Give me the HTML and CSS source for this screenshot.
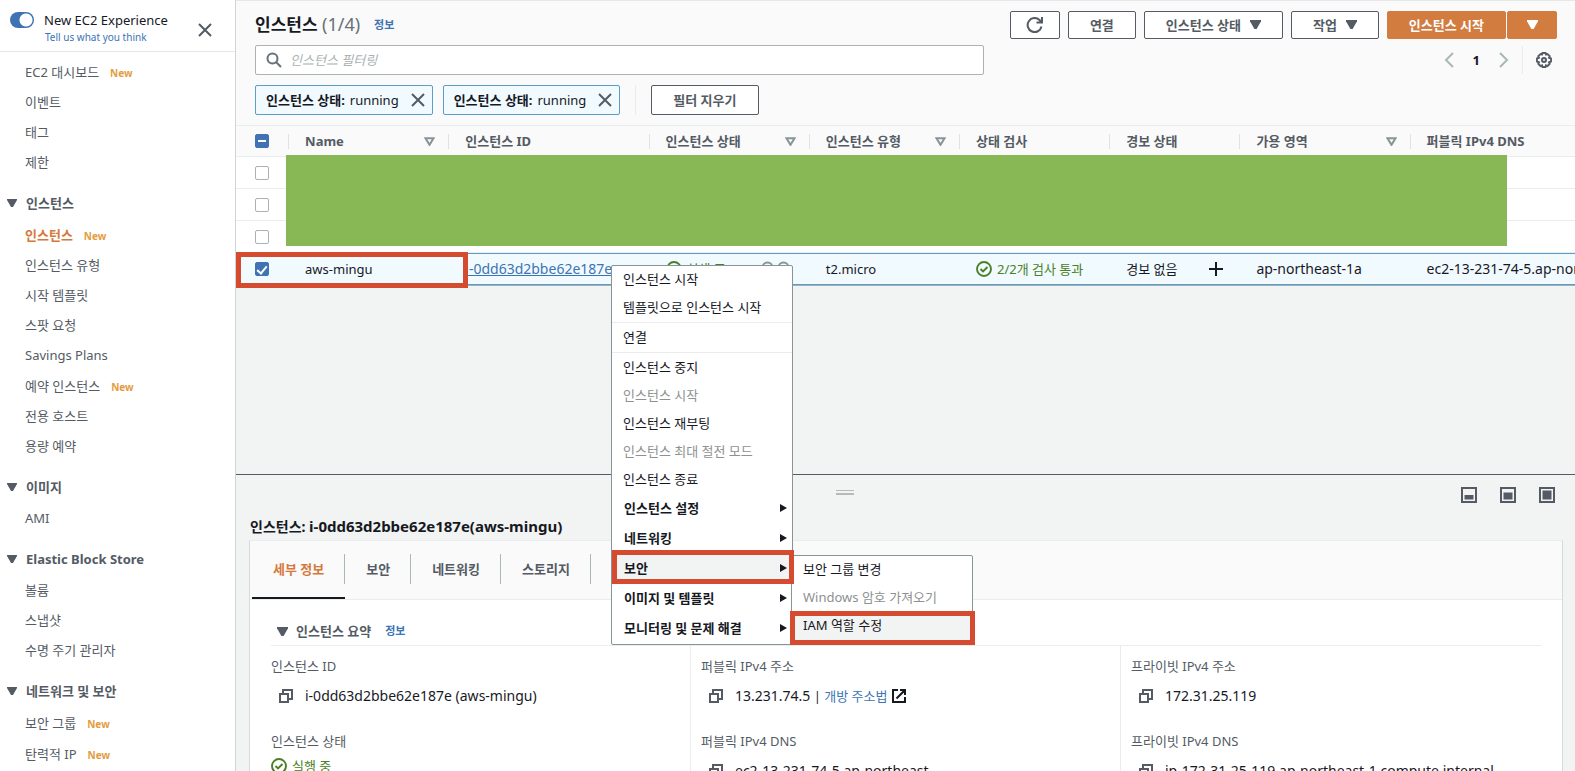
FILE: index.html
```html
<!DOCTYPE html>
<html lang="ko">
<head>
    <meta charset="UTF-8">
    <meta name="viewport" content="width=device-width, initial-scale=1.0">
    <title>인스턴스 | EC2 Management Console</title>
    <link rel="stylesheet" href="styles.css">
</head>
<body>
<!-- 공용 아이콘 -->
<svg class="sprite" aria-hidden="true">
    <symbol id="close" viewBox="0 0 16 16"><path d="M2 2l12 12M14 2L2 14" fill="none" stroke="currentColor" stroke-width="2"/></symbol>
    <symbol id="caret" viewBox="0 0 10 8"><path d="M0 0h10v1L6 8H4L0 1z" fill="currentColor"/></symbol>
    <symbol id="sort" viewBox="0 0 10 8"><path d="M1.300 1h7.400L5 7z" fill="none" stroke="currentColor" stroke-width="1.900"/></symbol>
    <symbol id="search" viewBox="0 0 16 16"><circle cx="6.500" cy="6.500" r="5" fill="none" stroke="currentColor" stroke-width="2"/><path d="M10 10l5 5" stroke="currentColor" stroke-width="2"/></symbol>
    <symbol id="ok" viewBox="0 0 16 16"><circle cx="8" cy="8" r="7" fill="none" stroke="currentColor" stroke-width="1.900"/><path d="M4.500 8l2.500 2.500 4.500-4.500" fill="none" stroke="currentColor" stroke-width="1.900"/></symbol>
    <symbol id="copy" viewBox="0 0 14 14"><path d="M1 5h8v8H1zM4 4V1h9v9h-3" fill="none" stroke="currentColor" stroke-width="2"/></symbol>
</svg>

<div class="layout">
    <aside class="sidebar">
        <div class="sidebar-top">
            <input type="checkbox" class="toggle" id="new-exp" checked>
            <div class="exp">
                <label for="new-exp">New EC2 Experience</label>
                <a href="#">Tell us what you think</a>
            </div>
            <button class="icon-btn" aria-label="닫기"><svg width="16" height="16"><use href="#close"/></svg></button>
        </div>
        <nav class="nav">
            <ul>
                <li class="has-new"><a href="#">EC2 대시보드</a><span class="new">New</span></li>
                <li><a href="#">이벤트</a></li>
                <li><a href="#">태그</a></li>
                <li><a href="#">제한</a></li>
            </ul>
            <h3><svg width="10" height="8"><use href="#caret"/></svg>인스턴스</h3>
            <ul>
                <li class="has-new active"><a href="#">인스턴스</a><span class="new">New</span></li>
                <li><a href="#">인스턴스 유형</a></li>
                <li><a href="#">시작 템플릿</a></li>
                <li><a href="#">스팟 요청</a></li>
                <li><a href="#">Savings Plans</a></li>
                <li class="has-new"><a href="#">예약 인스턴스</a><span class="new">New</span></li>
                <li><a href="#">전용 호스트</a></li>
                <li><a href="#">용량 예약</a></li>
            </ul>
            <h3><svg width="10" height="8"><use href="#caret"/></svg>이미지</h3>
            <ul>
                <li><a href="#">AMI</a></li>
            </ul>
            <h3><svg width="10" height="8"><use href="#caret"/></svg>Elastic Block Store</h3>
            <ul>
                <li><a href="#">볼륨</a></li>
                <li><a href="#">스냅샷</a></li>
                <li><a href="#">수명 주기 관리자</a></li>
            </ul>
            <h3><svg width="10" height="8"><use href="#caret"/></svg>네트워크 및 보안</h3>
            <ul>
                <li class="has-new"><a href="#">보안 그룹</a><span class="new">New</span></li>
                <li class="has-new"><a href="#">탄력적 IP</a><span class="new">New</span></li>
            </ul>
        </nav>
    </aside>

    <main class="main">
        <section class="list">
            <div class="toolbar">
                <div class="bar">
                    <h1>인스턴스 <span class="count">(1/4)</span></h1>
                    <a class="info" href="#">정보</a>
                    <div class="actions">
                        <button class="btn btn-refresh" aria-label="새로 고침">
                            <svg width="18" height="18" viewBox="0 0 18 18"><path d="M15.500 10.500A7 7 0 1 1 13.500 4L16 6.500M16 1v5.500h-5.500" fill="none" stroke="currentColor" stroke-width="2"/></svg>
                        </button>
                        <button class="btn">연결</button>
                        <button class="btn">인스턴스 상태<svg width="11" height="9"><use href="#caret"/></svg></button>
                        <button class="btn">작업<svg width="11" height="9"><use href="#caret"/></svg></button>
                        <div class="split">
                            <button class="btn primary">인스턴스 시작</button>
                            <button class="btn primary btn-more" aria-label="더 보기"><svg width="11" height="9"><use href="#caret"/></svg></button>
                        </div>
                    </div>
                </div>
                <div class="bar bar-search">
                    <div class="search">
                        <svg width="16" height="16"><use href="#search"/></svg>
                        <input type="text" aria-label="인스턴스 필터링" placeholder="인스턴스 필터링">
                    </div>
                    <div class="pager">
                        <button class="icon-btn" aria-label="이전"><svg width="10" height="16" viewBox="0 0 10 16"><path d="M9 1L2 8l7 7" fill="none" stroke="#aab7b8" stroke-width="2"/></svg></button>
                        <span>1</span>
                        <button class="icon-btn" aria-label="다음"><svg width="10" height="16" viewBox="0 0 10 16"><path d="M1 1l7 7-7 7" fill="none" stroke="#aab7b8" stroke-width="2"/></svg></button>
                        <button class="icon-btn settings" aria-label="설정">
                            <svg width="16" height="16" viewBox="0 0 16 16" fill="none" stroke="currentColor"><path d="M6.500 1h3l.5 1.600 1.500-.6 2.200 2.200-.7 1.500 2 .8v3l-2 .8.7 1.500-2.200 2.200-1.500-.7-.5 1.700h-3L6 13.300l-1.500.7-2.200-2.200.7-1.500-2-.8v-3l2-.8-.7-1.500L4.500 2l1.500.6z" stroke-width="1.900"/><circle cx="8" cy="8" r="2" stroke-width="2"/></svg>
                        </button>
                    </div>
                </div>
                <div class="bar bar-tags">
                    <span class="tag"><b>인스턴스 상태:</b> running<button class="icon-btn" aria-label="필터 제거"><svg width="16" height="16"><use href="#close"/></svg></button></span>
                    <span class="tag"><b>인스턴스 상태:</b> running<button class="icon-btn" aria-label="필터 제거"><svg width="16" height="16"><use href="#close"/></svg></button></span>
                    <div class="clear"><button class="btn">필터 지우기</button></div>
                </div>
            </div>

            <table class="grid">
                <colgroup>
                    <col class="c-check"><col class="c-160"><col class="c-200"><col class="c-160"><col class="c-150"><col class="c-150"><col class="c-130"><col class="c-170"><col class="c-200">
                </colgroup>
                <thead>
                <tr>
                    <th><input type="checkbox" class="check partial" aria-label="모두 선택"></th>
                    <th><div class="th">Name<svg width="11" height="9"><use href="#sort"/></svg></div></th>
                    <th><div class="th">인스턴스 ID</div></th>
                    <th><div class="th">인스턴스 상태<svg width="11" height="9"><use href="#sort"/></svg></div></th>
                    <th><div class="th">인스턴스 유형<svg width="11" height="9"><use href="#sort"/></svg></div></th>
                    <th><div class="th">상태 검사</div></th>
                    <th><div class="th">경보 상태</div></th>
                    <th><div class="th">가용 영역<svg width="11" height="9"><use href="#sort"/></svg></div></th>
                    <th><div class="th">퍼블릭 IPv4 DNS</div></th>
                </tr>
                </thead>
                <tbody>
                <tr><td><input type="checkbox" class="check" aria-label="행 1 선택"></td><td colspan="8"></td></tr>
                <tr><td><input type="checkbox" class="check" aria-label="행 2 선택"></td><td colspan="8"></td></tr>
                <tr><td><input type="checkbox" class="check" aria-label="행 3 선택"></td><td colspan="8"></td></tr>
                <tr class="selected">
                    <td><input type="checkbox" class="check" aria-label="aws-mingu 선택" checked></td>
                    <td>aws-mingu</td>
                    <td><a class="id-link code" href="#">i-0dd63d2bbe62e187e</a></td>
                    <td>
                        <div class="cell">
                            <span class="ok"><svg width="16" height="16"><use href="#ok"/></svg>실행 중</span>
                            <span class="lens"><svg width="16" height="16"><use href="#search"/></svg><svg width="16" height="16"><use href="#search"/></svg></span>
                        </div>
                    </td>
                    <td>t2.micro</td>
                    <td><span class="ok"><svg width="16" height="16"><use href="#ok"/></svg>2/2개 검사 통과</span></td>
                    <td><div class="cell">경보 없음<svg width="14" height="14" viewBox="0 0 14 14"><path d="M7 0v14M0 7h14" stroke="#16191f" stroke-width="2"/></svg></div></td>
                    <td class="code">ap-northeast-1a</td>
                    <td class="code">ec2-13-231-74-5.ap-northeast-1.compute.amazonaws.com</td>
                </tr>
                </tbody>
            </table>
            <div class="mask"></div>
            <div class="mark mark-row"></div>
        </section>

        <section class="panel">
            <div class="panel-bar">
                <span class="handle"></span>
                <div class="sizes">
                    <button class="icon-btn" aria-label="작게"><svg width="16" height="16" viewBox="0 0 16 16"><rect x="1" y="1" width="14" height="14" fill="none" stroke="currentColor" stroke-width="2"/><path d="M3.500 8h9v4.500h-9z" fill="currentColor"/></svg></button>
                    <button class="icon-btn" aria-label="중간"><svg width="16" height="16" viewBox="0 0 16 16"><rect x="1" y="1" width="14" height="14" fill="none" stroke="currentColor" stroke-width="2"/><path d="M3.500 5.500h9v7h-9z" fill="currentColor"/></svg></button>
                    <button class="icon-btn" aria-label="크게"><svg width="16" height="16" viewBox="0 0 16 16"><rect x="1" y="1" width="14" height="14" fill="none" stroke="currentColor" stroke-width="2"/><path d="M3.500 3.500h9v9h-9z" fill="currentColor"/></svg></button>
                </div>
            </div>
            <h2>인스턴스: <span class="title-id">i-0dd63d2bbe62e187e(aws-mingu)</span></h2>
            <div class="card">
                <div class="tabs">
                    <button class="tab active">세부 정보</button>
                    <button class="tab">보안</button>
                    <button class="tab">네트워킹</button>
                    <button class="tab">스토리지</button>
                </div>
                <div class="summary">
                    <h3><svg width="11" height="9"><use href="#caret"/></svg>인스턴스 요약 <a class="info" href="#">정보</a></h3>
                    <div class="columns">
                        <dl>
                            <dt>인스턴스 ID</dt>
                            <dd class="code"><svg width="14" height="14"><use href="#copy"/></svg>i-0dd63d2bbe62e187e (aws-mingu)</dd>
                            <dt>인스턴스 상태</dt>
                            <dd class="state"><span class="ok"><svg width="16" height="16"><use href="#ok"/></svg>실행 중</span></dd>
                        </dl>
                        <dl>
                            <dt>퍼블릭 IPv4 주소</dt>
                            <dd><svg width="14" height="14"><use href="#copy"/></svg><span class="code">13.231.74.5</span>&nbsp;|&nbsp;<a href="#">개방 주소법</a><svg class="ext" width="14" height="14" viewBox="0 0 14 14"><path d="M6 1H1v12h12V8M8 1h5v5M13 1L4.500 9.500" fill="none" stroke="currentColor" stroke-width="2"/></svg></dd>
                            <dt>퍼블릭 IPv4 DNS</dt>
                            <dd class="code"><svg width="14" height="14"><use href="#copy"/></svg>ec2-13-231-74-5.ap-northeast</dd>
                        </dl>
                        <dl>
                            <dt>프라이빗 IPv4 주소</dt>
                            <dd class="code"><svg width="14" height="14"><use href="#copy"/></svg>172.31.25.119</dd>
                            <dt>프라이빗 IPv4 DNS</dt>
                            <dd class="code"><svg width="14" height="14"><use href="#copy"/></svg>ip-172-31-25-119.ap-northeast-1.compute.internal</dd>
                        </dl>
                    </div>
                </div>
            </div>
        </section>

        <!-- 우클릭 메뉴 -->
        <ul class="menu context">
            <li><button>인스턴스 시작</button></li>
            <li><button>템플릿으로 인스턴스 시작</button></li>
            <li class="sep"><button>연결</button></li>
            <li class="sep"><button>인스턴스 중지</button></li>
            <li><button disabled>인스턴스 시작</button></li>
            <li><button>인스턴스 재부팅</button></li>
            <li><button disabled>인스턴스 최대 절전 모드</button></li>
            <li><button>인스턴스 종료</button></li>
            <li class="sub"><button>인스턴스 설정</button></li>
            <li class="sub"><button>네트워킹</button></li>
            <li class="sub open"><button>보안</button>
                <span class="mark mark-item"></span>
                <ul class="menu submenu">
                    <li><button>보안 그룹 변경</button></li>
                    <li><button disabled>Windows 암호 가져오기</button></li>
                    <li class="open"><button>IAM 역할 수정</button><span class="mark mark-item"></span></li>
                </ul>
            </li>
            <li class="sub"><button>이미지 및 템플릿</button></li>
            <li class="sub"><button>모니터링 및 문제 해결</button></li>
        </ul>
    </main>
</div>
</body>
</html>
```
FILE: styles.css
```css
* {
    box-sizing: border-box;
}
body {
    margin: 0;
    font-family: "Noto Sans", "Noto Sans CJK KR", sans-serif;
    font-size: 13px;
    line-height: 20px;
    color: #16191f;
    background: #f2f3f3;
}
ul, dl, dd, h1, h2, h3 {
    margin: 0;
    padding: 0;
    list-style: none;
}
a {
    color: #3c74b4;
    text-decoration: none;
}
button, input {
    font: inherit;
    color: inherit;
}
svg {
    flex: none;
}
.sprite {
    position: absolute;
    width: 0;
    height: 0;
}
.layout {
    display: flex;
    height: 100vh;
    overflow: hidden;
}
.icon-btn {
    display: flex;
    padding: 0;
    border: none;
    background: none;
    color: #545b64;
    cursor: pointer;
}
/* ID, IP, DNS 값 */
.code {
    font-size: 14px;
}

/* 사이드바 */
.sidebar {
    flex: none;
    width: 236px;
    background: #fff;
    border-right: 1px solid #cfd4d4;
}
.sidebar-top {
    display: flex;
    height: 52px;
    padding: 10px 22px 2px 10px;
    border-bottom: 1px solid #e4e7e7;
}
.toggle {
    appearance: none;
    width: 24px;
    height: 16px;
    margin: 2px 10px 0 0;
    border-radius: 8px;
    background: radial-gradient(circle at 16px 8px, #fff 6px, #3f73b3 7px);
}
.exp {
    display: flex;
    flex-direction: column;
    flex: 1;
    white-space: nowrap;
}
.exp a {
    font-size: 10px;
    line-height: 14px;
    padding-left: 1px;
}
.sidebar-top .icon-btn {
    align-self: center;
}
.nav {
    padding-top: 4px;
    color: #545b64;
}
.nav li {
    display: flex;
    align-items: center;
    height: 30px;
    padding-left: 25px;
}
.nav li.has-new {
    height: 31px;
}
.nav a {
    color: inherit;
}
.nav .active a {
    color: #d5793b;
    font-weight: bold;
}
.new {
    margin-left: 11px;
    padding-top: 3px;
    font-size: 10px;
    font-weight: bold;
    color: #e39c40;
}
.nav h3 {
    display: flex;
    align-items: center;
    gap: 9px;
    height: 32px;
    margin-top: 10px;
    padding-left: 7px;
    font-size: 13px;
}

/* 목록 */
.main {
    position: relative;
    flex: 1;
    min-width: 0;
    display: flex;
    flex-direction: column;
}
.list {
    position: relative;
    height: 474px;
    flex: none;
    overflow: hidden;
    border-top: 1px solid #e6e8e8;
}
.toolbar {
    padding: 10px 18px 10px 19px;
    background: #fafafa;
}
.bar {
    display: flex;
    align-items: center;
}
h1 {
    height: 28px;
    font-size: 17px;
    line-height: 26px;
}
.count {
    font-size: 18px;
    font-weight: normal;
    color: #687078;
}
.info {
    margin-left: 14px;
    font-size: 11px;
    font-weight: bold;
}
.actions {
    display: flex;
    gap: 8px;
    margin-left: auto;
}
.btn {
    display: flex;
    align-items: center;
    justify-content: center;
    gap: 9px;
    height: 28px;
    padding: 0 21px 1px;
    border: 1px solid #545b64;
    border-radius: 2px;
    background: #fff;
    color: #545b64;
    font-weight: bold;
    white-space: nowrap;
    cursor: pointer;
}
.btn-refresh {
    padding: 0 15px;
}
.split {
    display: flex;
    gap: 1px;
}
.primary {
    border-color: #d27c40;
    background: #d27c40;
    color: #fff;
}
.btn-more {
    width: 50px;
}
.bar-search {
    justify-content: space-between;
    margin-top: 6px;
}
.search {
    display: flex;
    align-items: center;
    gap: 8px;
    width: 56%;
    height: 30px;
    padding: 0 10px;
    border: 1px solid #aab2b3;
    border-radius: 2px;
    background: #fff;
    color: #687078;
}
.search input {
    flex: 1;
    padding: 0;
    border: none;
    outline: none;
    background: none;
}
.search input::placeholder {
    font-style: italic;
    color: #aab2b3;
}
.pager {
    display: flex;
    align-items: center;
    gap: 19px;
    height: 28px;
    padding-right: 5px;
    font-weight: bold;
}
.settings {
    align-items: center;
    height: 28px;
    margin-left: -6px;
    padding-left: 13px;
    border-left: 1px solid #eaeded;
}
.bar-tags {
    gap: 10px;
    margin-top: 10px;
}
.tag {
    display: flex;
    align-items: center;
    gap: 5px;
    height: 30px;
    padding: 0 6px 0 10px;
    border: 1px solid #5b9dc4;
    border-radius: 2px;
    background: #f1faff;
}
.tag .icon-btn {
    margin-left: 6px;
}
.clear {
    margin-left: 5px;
    padding-left: 15px;
    border-left: 1px solid #eaeded;
}
.clear .btn {
    height: 30px;
}

/* 표 */
.grid {
    table-layout: fixed;
    width: 1374px;
    border-spacing: 0;
    background: #fff;
}
.c-check { width: 52px; }
.c-130 { width: 130px; }
.c-150 { width: 150px; }
.c-160 { width: 160px; }
.c-170 { width: 170px; }
.c-200 { width: 200px; }
.grid th, .grid td {
    height: 32px;
    padding: 0 0 0 17px;
    border-bottom: 1px solid #eaeded;
    text-align: left;
    white-space: nowrap;
    overflow: hidden;
}
.grid th {
    padding-left: 0;
    border-top: 1px solid #eaeded;
    background: #fafafa;
    color: #545b64;
}
.grid td:first-child, .grid th:first-child {
    padding-left: 19px;
}
.th {
    display: flex;
    align-items: center;
    justify-content: space-between;
    height: 15px;
    padding: 0 13px 0 16px;
    border-left: 1px solid #e0e3e3;
}
.th svg {
    color: #879596;
}
.grid .selected td {
    border-top: 1px solid #5b9dc4;
    border-bottom: 1px solid #5b9dc4;
    background: #f1faff;
    box-shadow: 0 1px 0 #a5b0b4;
}
.check {
    appearance: none;
    display: block;
    width: 14px;
    height: 14px;
    margin: 0;
    border: 1px solid #aab2b3;
    border-radius: 2px;
    background: #fff;
}
.check:checked, .check.partial {
    display: grid;
    place-items: center;
    border-color: #3f73b3;
    background: #3f73b3;
}
.check.partial::after {
    content: "";
    width: 8px;
    height: 2px;
    background: #fff;
}
.check:checked::after {
    content: "";
    width: 4px;
    height: 8px;
    border: solid #fff;
    border-width: 0 2px 2px 0;
    transform: rotate(40deg);
}
.id-link {
    text-decoration: underline;
}
.cell {
    display: flex;
    align-items: center;
    justify-content: space-between;
    padding-right: 16px;
}
.ok {
    display: flex;
    align-items: center;
    gap: 5px;
    color: #4a8025;
}
.lens {
    display: flex;
    color: #879596;
}
.mask {
    position: absolute;
    left: 50px;
    right: 68px;
    top: 154px;
    height: 91px;
    background: #88b755;
}
.mark {
    position: absolute;
    border: 5px solid #d54b30;
}
.mark-row {
    left: 0;
    top: 251px;
    width: 232px;
    height: 36px;
}

/* 상세 패널 */
.panel {
    flex: 1;
    padding: 0 12px 0 13px;
    border-top: 1px solid #545b64;
}
.panel-bar {
    display: flex;
    align-items: center;
    height: 41px;
    padding: 0 8px 2px 0;
}
.handle {
    width: 18px;
    height: 5px;
    margin: -4px auto 0;
    border: solid #b5baba;
    border-width: 1px 0 2px;
}
.sizes {
    display: flex;
    gap: 23px;
    margin-left: 20px;
}
.panel h2 {
    height: 24px;
    padding-left: 1px;
    font-size: 14px;
}
.title-id {
    font-size: 15px;
}
.card {
    border: 1px solid #d5dbdb;
    border-top-color: #eaeded;
    background: #fff;
}
.tabs {
    display: flex;
    height: 59px;
    padding-left: 2px;
    border-bottom: 1px solid #eaeded;
    background: #fafafa;
}
.tab {
    display: flex;
    align-items: center;
    padding: 0 0 0 21px;
    border: none;
    border-bottom: 2px solid transparent;
    background: none;
    color: #545b64;
    font-weight: bold;
    white-space: nowrap;
}
.tab::after {
    content: "";
    height: 30px;
    margin-left: 20px;
    border-right: 1px solid #aab7b8;
}
.tab.active {
    border-bottom-color: #16191f;
    color: #d5793b;
}
.summary {
    padding: 19px 21px 0;
}
.summary h3 {
    display: flex;
    align-items: center;
    height: 27px;
    padding: 0 0 2px 6px;
    border-bottom: 1px solid #eaeded;
    font-size: 13px;
    color: #545b64;
}
.summary h3 svg {
    margin-right: 8px;
}
.columns {
    display: grid;
    grid-template-columns: repeat(3, 1fr);
    margin: 0 -9px 0 -11px;
}
.columns dl {
    padding: 10px 10px 0;
    border-left: 1px solid #eaeded;
}
.columns dl:first-child {
    border-left-color: transparent;
}
.columns dt {
    color: #545b64;
}
.columns dd {
    display: flex;
    align-items: center;
    height: 40px;
    margin-bottom: 15px;
    padding-left: 8px;
    white-space: nowrap;
}
.columns dd > svg:first-child {
    margin-right: 12px;
    color: #545b64;
}
.columns dd.state {
    height: 30px;
    padding-left: 0;
}
.ext {
    margin-left: 5px;
}

/* 메뉴 */
.menu {
    position: absolute;
    width: 182px;
    border: 1px solid #879596;
    border-radius: 2px;
    background: #fff;
}
.context {
    left: 375px;
    top: 265px;
}
.menu li {
    position: relative;
}
.menu .sep {
    padding-top: 1px;
    border-top: 1px solid #eaeded;
}
.menu button {
    display: flex;
    align-items: center;
    justify-content: space-between;
    width: 100%;
    height: 28px;
    padding: 0 5px 2px 11px;
    border: none;
    background: none;
    white-space: nowrap;
}
.menu button:disabled {
    color: #8d9191;
}
.menu .sub > button {
    height: 30px;
    padding-left: 12px;
    font-weight: bold;
}
.menu .sub > button::after {
    content: "";
    border: solid transparent;
    border-width: 4px 0 4px 7px;
    border-left-color: #16191f;
}
.menu .open > button {
    background: #f2f3f3;
}
.submenu {
    left: 179px;
    top: 1px;
}
.mark-item {
    left: 0;
    right: -2px;
    top: -4px;
    height: 34px;
    z-index: 1;
}
.submenu .mark-item {
    left: -2px;
    right: -3px;
    top: -1px;
}
```
